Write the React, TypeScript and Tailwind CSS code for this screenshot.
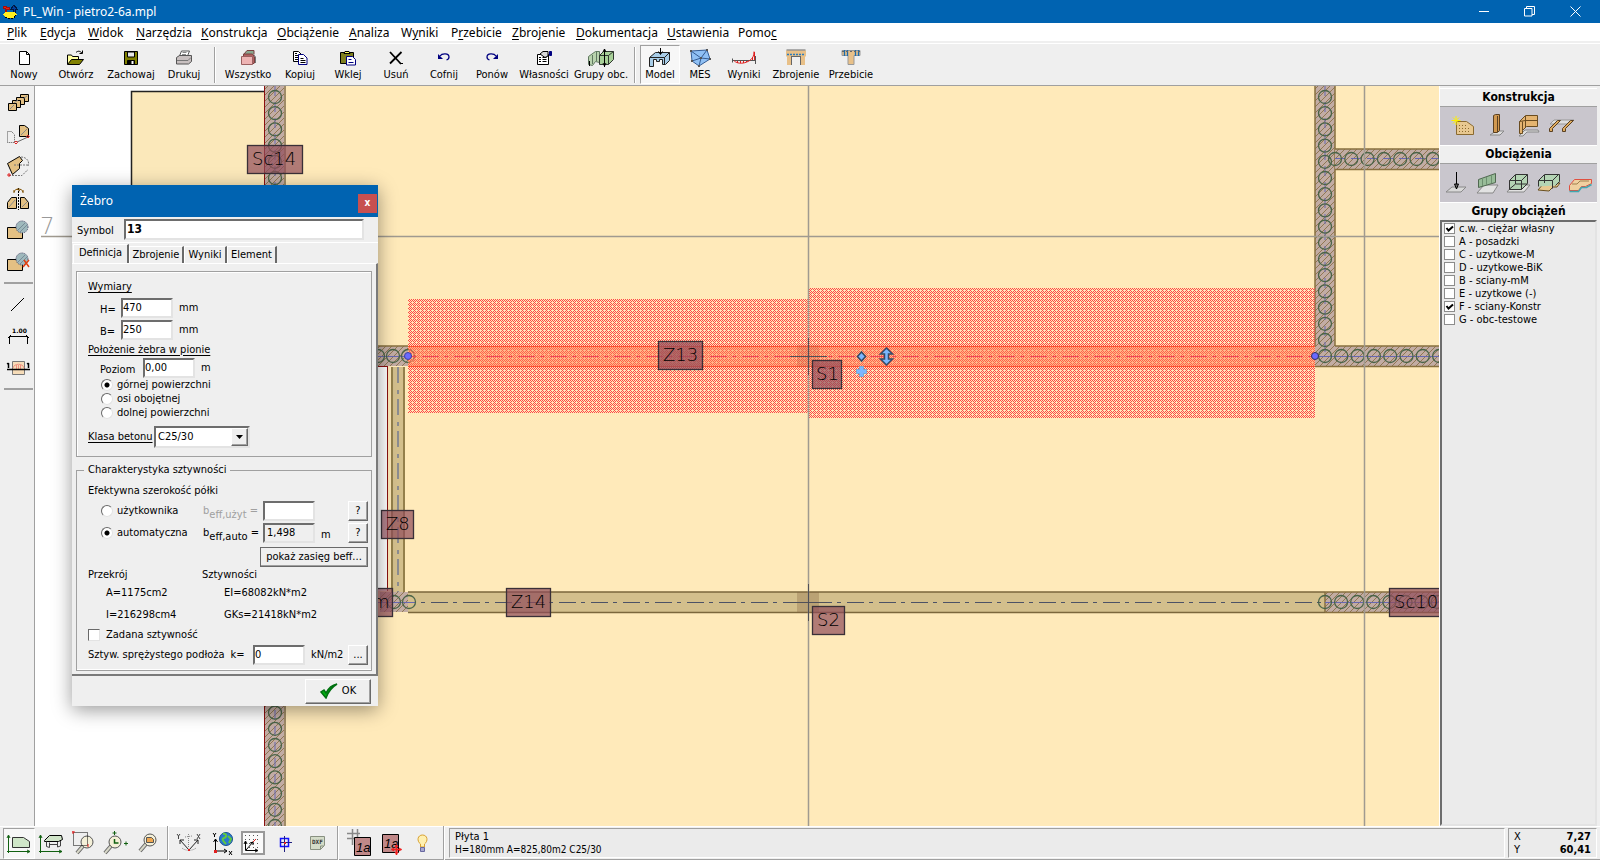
import React, { useState } from "react";

const UI_FONT = "font-['DejaVu_Sans_Condensed','DejaVu_Sans',sans-serif]";
const SEGOE = "font-['Noto_Sans','Open_Sans',sans-serif]";
const SUNKEN =
  "border-2 border-t-[#6d6d6d] border-l-[#6d6d6d] border-r-[#e3e3e3] border-b-[#e3e3e3] outline-none rounded-none";
const RAISED =
  "border border-t-white border-l-white border-r-[#696969] border-b-[#696969] shadow-[inset_-1px_-1px_0_#a0a0a0] bg-[#efefef]";

interface IconProps {
  w?: number;
  h?: number;
  children: React.ReactNode;
}

const Ico: React.FC<IconProps> = ({ w = 24, h = 20, children }) => (
  <svg width={w} height={h} viewBox={`0 0 ${w} ${h}`} fill="none" stroke="#000" strokeWidth="1" className="shrink-0">
    {children}
  </svg>
);

/* ---------- top toolbar icons (24x20) ---------- */

const icons = {
  nowy: (
    <Ico>
      <path d="M7.500 3.500h7l3 3v10h-10z" fill="#fff" />
      <path d="M14.500 3.500v3h3" />
    </Ico>
  ),
  otworz: (
    <Ico>
      <path d="M3.500 16v-9h4l1 1.500h6v3" fill="#ffffa0" />
      <path d="M3.500 16.500l4-5h12l-4 5z" fill="#808000" />
      <path d="M12 4.500c2-2 4-1.500 6 .5M18.500 2.500v3h-3" />
    </Ico>
  ),
  zachowaj: (
    <Ico>
      <path d="M5.500 3.500h13v13h-13z" fill="#808000" />
      <path d="M8.500 4h7v5h-7z" fill="#e8e8e8" />
      <path d="M8.500 12.500h7v4h-7z" fill="#000" />
      <path d="M13.500 13v3" stroke="#fff" strokeWidth="2" />
    </Ico>
  ),
  drukuj: (
    <Ico>
      <path d="M7.500 8l2-5h8l-2 5z" fill="#fff" stroke="#555" />
      <path d="M4.500 9.500l3-2h12v6l-3 2.500h-12z" fill="#c8c0c0" stroke="#555" />
      <path d="M5 12.500h11l3-3" stroke="#777" />
      <path d="M10.500 4.500h4M10 6.500h4" stroke="#888" />
    </Ico>
  ),
  wszystko: (
    <Ico>
      <path d="M8 6l3-3.500h7v4" fill="#8aa890" stroke="#7a4040" />
      <path d="M7.500 9v-3h9l2 3v6l-2 1" fill="#b06060" stroke="#7a4040" />
      <path d="M5.500 8.500h11v8h-11z" fill="#eeb4b4" stroke="#9a6060" />
      <path d="M18 7l1.500 2v6" stroke="#777" />
    </Ico>
  ),
  kopiuj: (
    <Ico>
      <path d="M5.500 3.500h5l3 3v7h-8z" fill="#fff" />
      <path d="M7 7.500h4M7 9.500h4M7 5.500h2M7 11.500h3" />
      <path d="M10.500 6.500h5l3.500 3.500v6.500h-8.500z" fill="#fff" stroke="#000080" />
      <path d="M12.500 10.500h3M12.500 12.500h5M12.500 14.500h5" />
    </Ico>
  ),
  wklej: (
    <Ico>
      <path d="M4.500 4.500h13v11h-13z" fill="#808020" />
      <path d="M8 5.500l1-2h4l1 2z" fill="#ffff60" />
      <path d="M10.500 8.500h6l3 3v5.500h-9z" fill="#fff" stroke="#000080" />
      <path d="M12.500 11.500h3M12.500 14.500h5" stroke="#000080" />
    </Ico>
  ),
  usun: (
    <Ico>
      <path d="M6 4l11 12M17.500 4L6 15.500" strokeWidth="1.800" />
      <path d="M17 15.500h2" />
    </Ico>
  ),
  cofnij: (
    <Ico>
      <path d="M8 8c2-3 9-3 9 1 0 2-1 2.500-2.500 3" stroke="#000080" strokeWidth="1.300" />
      <path d="M6 6v5h5z" fill="#000080" stroke="none" />
    </Ico>
  ),
  ponow: (
    <Ico>
      <path d="M16 8c-2-3-9-3-9 1 0 2 1 2.500 2.500 3" stroke="#000080" strokeWidth="1.300" />
      <path d="M18 6v5h-5z" fill="#000080" stroke="none" />
    </Ico>
  ),
  wlasnosci: (
    <Ico>
      <path d="M5.500 6.500h11v10h-11z" fill="#fff" />
      <path d="M7 9.500h2M10.500 9.500h4M7 11.500h2M10.500 11.500h4M7 13.500h2M10.500 13.500h4" />
      <path d="M8 6l3-2.500h5v4.500l-3 1.500z" fill="#d8d8d8" />
      <path d="M17.500 3.500h2v4h-2z" fill="#000080" stroke="#000080" />
    </Ico>
  ),
  grupy: (
    <Ico w={30} h={20}>
      <path d="M2.500 16.500v-8l7-5h4v11l-4-1-3 4z" fill="#b9d3ae" stroke="#607860" />
      <path d="M6.500 16V7M10.500 13V4" stroke="#607860" />
      <path d="M13.500 7.500l4-4h10v8l-5 5h-9z" fill="#a8d098" stroke="#303830" />
      <path d="M22.500 16.500v-9h-9M22.500 7.500l5-4" stroke="#303830" />
      <path d="M18.500 1v18M17 4l1.500-3L20 4M17 15l1.500 3 1.500-3M3.500 13v5" />
    </Ico>
  ),
  model: (
    <Ico w={26} h={20}>
      <path d="M2.500 9.500l6-5h14v8l-4 4h-3v-5h-3v2l-3 0v-2h-3v7h-4z" fill="#a8cde8" stroke="#222" />
      <path d="M3 9.500h14.500v6.500M17.500 9.500l5-5" stroke="#222" />
      <path d="M13.500 0v6M11.500 3.500l2 3 2-3" />
    </Ico>
  ),
  mes: (
    <Ico w={26} h={20}>
      <path d="M4 3l16-1 3 9-11 7-7-5z" fill="#8fc0f4" stroke="#345c94" />
      <path d="M4 3l10 7 6-8M14 10l9 1M14 10l-2 8M5 13l9-3" stroke="#345c94" />
      <path d="M3 2h2v2h-2zM19 1h2v2h-2zM22 10h2v2h-2zM11 17h2v2h-2zM4 12h2v2h-2zM13 9h2v2h-2z" fill="#555" stroke="none" />
    </Ico>
  ),
  wyniki: (
    <Ico w={28} h={20}>
      <path d="M2 12.500h24" stroke="#555" />
      <path d="M4 12.500c3 4 12 3.500 17-1 2-2 3-4 3-8" stroke="#e02020" />
      <path d="M7.500 13v2M10.500 13v2M13.500 13v2M16.500 13v1M22.500 9v3M24.500 4v8" stroke="#e02020" />
      <path d="M2.500 10.500v4M25.500 8v8" stroke="#555" />
    </Ico>
  ),
  zbrojenie: (
    <Ico>
      <path d="M2 2.500h20v6h-20z" fill="#e8c088" stroke="none" />
      <path d="M3 8h4v9h-4zM17 8h4v9h-4z" fill="#e8c088" stroke="none" />
      <path d="M7 8.500h10M2.500 2h19" stroke="#666" />
      <path d="M3 6.500h18" stroke="#2a7cc0" strokeDasharray="2 1" strokeWidth="1.500" />
      <path d="M7.500 9v8M16.500 9v8" stroke="#666" />
    </Ico>
  ),
  przebicie: (
    <Ico>
      <path d="M3 2.500h18v5h-6v9h-6v-9h-6z" fill="#e8c088" stroke="#999" />
      <path d="M5.500 2v6M8.500 2v6M16.500 2v6M19.500 2v6" stroke="#1a6cb0" strokeWidth="1.300" />
      <path d="M3 3.500h18" stroke="#666" strokeDasharray="2 2" />
    </Ico>
  ),
};

interface ToolItem {
  label: string;
  width: string;
  icon: React.ReactNode;
  active?: boolean;
}

const fileTools: ToolItem[] = [
  { label: "Nowy", width: "w-12", icon: icons.nowy },
  { label: "Otwórz", width: "w-14", icon: icons.otworz },
  { label: "Zachowaj", width: "w-[54px]", icon: icons.zachowaj },
  { label: "Drukuj", width: "w-[52px]", icon: icons.drukuj },
];

const editTools: ToolItem[] = [
  { label: "Wszystko", width: "w-14", icon: icons.wszystko },
  { label: "Kopiuj", width: "w-12", icon: icons.kopiuj },
  { label: "Wklej", width: "w-12", icon: icons.wklej },
  { label: "Usuń", width: "w-12", icon: icons.usun },
  { label: "Cofnij", width: "w-12", icon: icons.cofnij },
  { label: "Ponów", width: "w-12", icon: icons.ponow },
  { label: "Własności", width: "w-14", icon: icons.wlasnosci },
  { label: "Grupy obc.", width: "w-[58px]", icon: icons.grupy },
];

const viewTools: ToolItem[] = [
  { label: "Model", width: "w-10", icon: icons.model, active: true },
  { label: "MES", width: "w-10", icon: icons.mes },
  { label: "Wyniki", width: "w-12", icon: icons.wyniki },
  { label: "Zbrojenie", width: "w-14", icon: icons.zbrojenie },
  { label: "Przebicie", width: "w-[54px]", icon: icons.przebicie },
];

const ToolGroup: React.FC<{ items: ToolItem[] }> = ({ items }) => (
  <>
    {items.map((item) => (
      <button
        key={item.label}
        type="button"
        className={`${item.width} flex h-[39px] flex-col items-center border pt-0.5 text-[11px] leading-[14px] whitespace-nowrap ${
          item.active ? "border-t-[#a0a0a0] border-l-[#a0a0a0] border-r-white border-b-white bg-[#f7f7f7]" : "border-transparent"
        }`}
      >
        {item.icon}
        {item.label}
      </button>
    ))}
  </>
);

const VSep = () => <div className="mx-1 h-9 w-[2px] self-center border-l border-l-[#a0a0a0] bg-white" />;

/* ---------- menu ---------- */

const menu = [
  ["", "P", "lik", "w-[33px]"],
  ["", "E", "dycja", "w-12"],
  ["", "W", "idok", "w-12"],
  ["", "N", "arzędzia", "w-[65px]"],
  ["", "K", "onstrukcja", "w-[76px]"],
  ["", "O", "bciążenie", "w-[72px]"],
  ["", "A", "naliza", "w-[52px]"],
  ["W", "y", "niki", "w-[50px]"],
  ["P", "r", "zebicie", "w-[61px]"],
  ["", "Z", "brojenie", "w-16"],
  ["", "D", "okumentacja", "w-[91px]"],
  ["", "U", "stawienia", "w-[71px]"],
  ["Pomo", "c", "", "w-12"],
];

/* ---------- left toolbar icons ---------- */

const SAND = "#e3c083";

const sideTop = [
  <Ico w={24} h={22} key="array">
    {[0, 1, 2, 3].map((i) => (
      <path key={i} d={`M${14.5 - i * 4} ${3.5 + i * 3}h8v7h-8z`} fill={SAND} />
    ))}
    <path d="M4 18l4-4M8 12l4-3M17 8l4-3" stroke="#888" />
  </Ico>,
  <Ico w={24} h={22} key="move">
    <path d="M13.500 2.500h5l4 3v8h-9z" fill={SAND} />
    <path d="M15 12l6-6" stroke="#888" />
    <path d="M1.500 19.500v-11h4l3 3v8z" stroke="#555" strokeDasharray="1 1" />
    <path d="M11 19l11-5" stroke="#666" />
    <path d="M10 18l1.500 1.500L10 21l-1.500-1.500zM22 12l1.500 1.500L22 15l-1.500-1.500z" stroke="#e02020" />
  </Ico>,
  <Ico w={24} h={22} key="rotate">
    <path d="M1.500 8.500l12-7 3 4-3 3v5l-7 6z" fill={SAND} />
    <path d="M3 20.500h13l6-6M8 10h14M15 2c6 0 9 5 7 9" stroke="#777" strokeDasharray="2 1" />
    <path d="M1 20h4M3 18v4" stroke="#e02020" />
  </Ico>,
  <Ico w={24} h={24} key="mirror">
    <path d="M1.500 22.500v-6l4-5h5v11zM22.500 22.500v-6l-4-5h-4v11z" fill={SAND} />
    <path d="M3 21l6-7M16 21l5-5" stroke="#888" />
    <path d="M12.500 2v22" strokeDasharray="2 1" />
    <path d="M8 6c1-4 8-4 9 0M8 4v3M17 4v3M11 3l3 2" stroke="#805000" />
  </Ico>,
  <Ico w={24} h={22} key="cut">
    <path d="M1.500 8.500h15v11h-15z" fill={SAND} />
    <circle cx="16" cy="8" r="6" fill="#9fb9bd" stroke="#446" strokeDasharray="1 1" />
    <path d="M12 11l7-7M14 13l7-7" stroke="#788c98" />
  </Ico>,
  <Ico w={24} h={22} key="cutdel">
    <path d="M1.500 8.500h15v11h-15z" fill={SAND} />
    <circle cx="16" cy="8" r="6" fill="#9fb9bd" stroke="#446" strokeDasharray="1 1" />
    <path d="M12 11l7-7M14 13l7-7" stroke="#788c98" />
    <path d="M18 9l5 7M23 9l-6 7" stroke="#e04010" strokeWidth="1.500" />
  </Ico>,
];

const sideBottom = [
  <Ico w={24} h={22} key="line">
    <path d="M5 18L18 5" />
  </Ico>,
  <Ico w={24} h={22} key="dim">
    <text x="6" y="8" fontSize="6" fontWeight="700" fill="#000" stroke="none" fontFamily="DejaVu Sans, sans-serif">
      1.00
    </text>
    <path d="M3.500 19v-7.500h18V19M2 13l3-3M20 10l3 3" />
  </Ico>,
  <Ico w={24} h={22} key="section">
    <path d="M6.500 4.500h12v13h-12z" fill="#f6dcb8" stroke="#777" />
    <path d="M7 11c1-5 10-5 11 0M10.500 8v4M12.500 8v4M14.500 8v4" stroke="#f09080" />
    <path d="M1 12.500h23" strokeWidth="1.500" />
    <path d="M2.500 6v5M22.500 6v5M1 7l1.500-1M21 7l1.500-1" strokeWidth="1.500" />
  </Ico>,
];

/* ---------- bottom toolbar icons ---------- */

const lens = (x: number, y: number) => (
  <>
    <path d={`M${x - 4} ${y + 4}l-6 7`} stroke="#666" strokeWidth="4" />
    <path d={`M${x - 4} ${y + 4}l-6 7`} stroke="#d8d8c8" strokeWidth="2" />
    <circle cx={x} cy={y} r="6" fill="#f4f0d8" stroke="#555" />
  </>
);

const axes = <path d="M2.500 6v17M1 8l1.500-3L4 8M1 21.500h23M21 20l3 1.500-3 1.500" stroke="#106010" />;

const viewIcons = [
  <Ico w={26} h={26} key="plan">
    {axes}
    <path d="M6.500 17.500v-10h11l6 4v6z" fill="#cfe6c8" stroke="#333" />
  </Ico>,
  <Ico w={26} h={26} key="iso">
    {axes}
    <path d="M6.500 10.500l5-5h12l1 4-4 2h-14z" fill="#d0e4c8" />
    <path d="M8.500 11.500v5l3 1v-5M19.500 12v5l3-1v-5M11 14.500h8" stroke="#444" />
  </Ico>,
  <Ico w={26} h={26} key="zoomwin">
    {lens(17, 12)}
    <path d="M3.500 2.500h14v13h-14z" strokeDasharray="1 1" />
    <path d="M3 1v3M2 2h3M18 14v3" stroke="#e02020" />
  </Ico>,
  <Ico w={26} h={26} key="pan">
    {lens(13, 12)}
    <path d="M12.500 9v4h4" stroke="#106010" strokeWidth="1.500" />
    <path d="M12.500 1v4M10.500 3h4M22 13.500h4M24 11.500v4" stroke="#106010" />
  </Ico>,
  <Ico w={26} h={26} key="zoomall">
    {lens(16, 10)}
    <path d="M12.500 12.500v-5h5l2 2v3z" fill="#f0a850" stroke="#555" />
  </Ico>,
];

const axisIcons = [
  <Ico w={26} h={26} key="angle">
    <path d="M4 10l9 10 9-10M4 14v-4h4M22 14v-4h-4" stroke="#222" />
    <path d="M1 4l1.500 2L4 4M2.500 6v3M21 4l3 5M24 4l-3 5" stroke="#444" />
    <path d="M6 18c3 3 11 3 14 0M12.500 4v14M9 7l7-1" stroke="#888" strokeDasharray="1 1" />
    <path d="M12 19h2v2h-2z" fill="#e02020" stroke="none" />
  </Ico>,
  <Ico w={26} h={26} key="globe">
    <circle cx="18" cy="9" r="6.500" fill="#2878d0" stroke="#185090" />
    <path d="M15 4c4-1 4 3 1 4s0 4 2 6M20 6l3 3-2 4" stroke="#60c840" strokeWidth="2" />
    <path d="M7.500 9v12h11M5.500 12l2-3 2 3M16 19l3 2-3 2M5 3l1.500 2L8 3M6.500 5v2M21 21l3 4M24 21l-3 4" />
    <path d="M6 20h3v3h-3z" fill="#e02020" stroke="none" />
  </Ico>,
  <Ico w={26} h={26} key="grid">
    <path d="M2 2h22v22h-22z" stroke="#999" strokeWidth="2" fill="#fafafa" />
    <path d="M5 5.500h16M5 9.500h16M5 13.500h16M5 17.500h16" strokeDasharray="1 3" stroke="#555" />
    <path d="M5.500 12v8.500H17M6 20l7-8M13 12l-3 1M13 12v3M4 14l1.500-3L7 14M15 19l3 1.500-3 1.500" />
    <path d="M13 12l3-3" stroke="#e02020" />
  </Ico>,
  <Ico w={26} h={26} key="node">
    <path d="M8.500 8.500h8v8h-8z" stroke="#1010ff" strokeWidth="1.500" />
    <path d="M12.500 6v16M8 12.500h12" stroke="#202080" />
    <path d="M12 12h2v2h-2z" fill="#e02020" stroke="none" />
  </Ico>,
  <Ico w={26} h={26} key="dxf">
    <path d="M6.500 6.500h14v9l-4 4h-10z" fill="#d4dcc8" stroke="#889080" />
    <path d="M20 16h-3.500v3.500" stroke="#889080" />
    <text x="8" y="14" fontSize="6" fontWeight="700" fill="#333" stroke="none" fontFamily="DejaVu Sans Mono, monospace">
      DXF
    </text>
  </Ico>,
];

const labelIcons = [
  <Ico w={26} h={30} key="grid1a">
    <path d="M6.500 1v16M11.500 1v10M1 5.500h13M1 10.500h9" stroke="#888" strokeWidth="1.500" />
    <path d="M8.500 9.500h16v18h-16z" fill="#c08888" />
    <text x="10" y="24" fontSize="13" fontStyle="italic" fill="#000" stroke="none" fontFamily="Liberation Sans, sans-serif">
      1a
    </text>
  </Ico>,
  <Ico w={26} h={30} key="move1a">
    <path d="M4.500 6.500h16v18h-16z" fill="#c08888" />
    <text x="6" y="20" fontSize="13" fontStyle="italic" fill="#000" stroke="none" fontFamily="Liberation Sans, sans-serif">
      1a
    </text>
    <path d="M18.500 17v10M13.500 21.500h10" stroke="#f02020" strokeWidth="1.500" />
    <path d="M16.500 19l2-3 2 3zM16.500 24l2 3 2-3zM16 19.500l-3 2 3 2zM21 19.500l3 2-3 2z" fill="#f02020" stroke="none" />
  </Ico>,
  <Ico w={26} h={26} key="bulb">
    <path d="M10.500 17v-3c-4-3-3-9 2-9s6 6 2 9v3z" fill="#fff0b0" stroke="#d8a030" />
    <path d="M10.500 17.500h4v4h-4z" fill="#a8a8d0" stroke="#6868a0" />
  </Ico>,
];

/* ---------- right panel icons ---------- */

const constructionIcons = [
  <Ico w={26} h={26} key="plate">
    <path d="M5.500 21.500v-13h10l7 5v8z" fill="#e8c890" stroke="#8a6a30" />
    <path d="M8 12.500h8M8 15.500h12M8 18.500h12" stroke="#8a6a30" strokeDasharray="1 2" />
    <path d="M5 3v9M.5 7.500h9M2 4.500l6 6M8 4.500l-6 6" stroke="#fff000" />
  </Ico>,
  <Ico w={26} h={26} key="column">
    <path d="M7 22l6-4h8l-4 4z" fill="#ddd" stroke="#888" />
    <path d="M10.500 19.500v-17l2-1h4v16l-2 2z" fill="#d09850" stroke="#5a4020" />
    <path d="M14.500 3v16" stroke="#5a4020" />
  </Ico>,
  <Ico w={26} h={26} key="wall">
    <path d="M4 23l6-6h13l1 2h-12l-4 4z" fill="#ddd" stroke="#888" />
    <path d="M4.500 20.500v-12l6-6h12v11h-11l-4 4v3z" fill="#e4b470" stroke="#6a4c20" />
    <path d="M10.500 14v-11M4.500 8.500l6-1h12M7.500 17.500v-9" stroke="#6a4c20" />
  </Ico>,
  <Ico w={28} h={26} key="rib">
    <path d="M3 11l4-4h20l-4 4z" fill="#ddd" stroke="#999" />
    <path d="M2.500 18.500v-3l8-8h3l-8 8v3zM15.500 18.500v-3l8-8h3l-8 8v3z" fill="#e0ac60" stroke="#5a4020" />
  </Ico>,
];

const loadIcons = [
  <Ico w={26} h={26} key="point">
    <path d="M3 22l6-5h14l-5 5z" fill="#d8d8d8" stroke="#888" />
    <path d="M13.500 2v17" />
    <path d="M11.500 14l2 5 2-5z" fill="#666" />
  </Ico>,
  <Ico w={26} h={26} key="linear">
    <path d="M3 23l7-8h14l-5 8z" fill="#e2e2e2" stroke="#888" />
    <path d="M4.500 17.500v-8l17-6v9z" fill="#98bc98" stroke="#506850" />
    <path d="M8.500 8v8M12.500 7v8M17.500 5v8" stroke="#6e9070" />
  </Ico>,
  <Ico w={26} h={26} key="area">
    <path d="M2 22l6-7h17l-6 7z" fill="#e2e2e2" stroke="#888" />
    <path d="M4.500 19.500v-9l6-6h12v9l-6 6z" fill="#b4d4b4" stroke="#333" />
    <path d="M4.500 10.500h12v9M16.500 10.500l6-6M10.500 5v9h12M10.500 14l-6 5" stroke="#333" />
  </Ico>,
  <Ico w={26} h={26} key="area-shape">
    <path d="M2 20l6-7h16l-3 4h-4l-4 4z" fill="#e8c890" stroke="#6a5020" />
    <path d="M2.500 16.500v-6l6-6h15v7l-4 4" fill="#b4d4b4" stroke="#333" />
    <path d="M2.500 10.500h14l6-6M16.500 10.500v8M8.500 5v8" stroke="#333" />
  </Ico>,
  <Ico w={26} h={26} key="temp">
    <path d="M2.500 15.500l5-6h17v4l-6 3h-4l-3 4h-9z" fill="#f0d0a0" stroke="#e05040" />
    <path d="M2.500 21.500h9l3-4h5l5-3" stroke="#40a8b0" strokeWidth="1.500" />
    <path d="M5 14h5l3-3h9" stroke="#a08050" />
  </Ico>,
];

/* ---------- plan drawing ---------- */

const range = (from: number, to: number, step: number) => {
  const out: number[] = [];
  for (let v = from; v < to; v += step) out.push(v);
  return out;
};

const Piles: React.FC<{ xs?: number[]; ys?: number[]; x?: number; y?: number }> = ({ xs, ys, x = 0, y = 0 }) => (
  <g stroke="#4a6448" strokeWidth="1.300" fill="none">
    {xs?.map((cx) => <circle key={cx} cx={cx} cy={y} r="6.500" />)}
    {ys?.map((cy) => <circle key={cy} cx={x} cy={cy} r="6.500" />)}
  </g>
);

interface TagProps {
  x: number;
  y: number;
  w: number;
  h?: number;
  text: string;
  tx?: number;
}

const Tag: React.FC<TagProps> = ({ x, y, w, h = 28, text, tx = 5 }) => (
  <g>
    <rect x={x + 0.5} y={y + 0.5} width={w} height={h} fill="#904c5a" fillOpacity="0.7" stroke="#3a3038" strokeWidth="1.300" />
    <text x={x + tx} y={y + 20} fontSize="18" fontWeight="200" fill="#000" fontFamily="DejaVu Sans, sans-serif">
      {text}
    </text>
  </g>
);

const Plan = () => (
  <svg className="absolute inset-0 h-full w-full" aria-label="Rzut płyty">
    <defs>
      <pattern id="wall" width="6" height="6" patternUnits="userSpaceOnUse">
        <rect width="6" height="6" fill="#c2aca4" />
        <path d="M-1 7L7 -1M-1 1L1 -1M5 7L7 5" stroke="#8a7048" strokeWidth="0.900" />
      </pattern>
      <pattern id="range" width="4" height="4" patternUnits="userSpaceOnUse">
        <path
          d="M0 0h1v1h-1zM1 1h1v1h-1zM2 2h1v1h-1zM3 3h1v1h-1zM3 1h1v1h-1zM1 3h1v1h-1zM2 0h1v1h-1z"
          fill="#ff4848"
          shapeRendering="crispEdges"
        />
      </pattern>
    </defs>
    <g transform="translate(-35 -86)">
      {/* slabs */}
      <rect x="131" y="91" width="134" height="300" fill="#fbe8ba" />
      <path d="M131.500 391V91.500H265" stroke="#222" fill="none" strokeWidth="1.500" />
      <rect x="265" y="86" width="2400" height="2000" fill="#ffeaba" />
      <rect x="300" y="367" width="87" height="224" fill="#fff" />
      <path d="M387.500 367v224M360 366.500h28" stroke="#8b1010" />

      {/* vertical wall, left */}
      <rect x="265" y="86" width="20" height="2000" fill="url(#wall)" />
      <path d="M285 86v2000" stroke="#a08c68" strokeWidth="2" />
      <path d="M264.500 86v2000" stroke="#8b1010" />
      <path d="M275 86v2000" stroke="#6868b0" strokeDasharray="10 6" />
      <Piles x={275} ys={range(97, 2000, 16.2)} />

      {/* ribs */}
      <rect x="391" y="367" width="14" height="225" fill="#d3bf8c" />
      <path d="M392 367v225M404 367v225" stroke="#94804c" strokeWidth="2" />
      <path d="M398 367v225" stroke="#8c8c90" strokeWidth="2" strokeDasharray="16 7 4 5" />
      <rect x="408" y="592" width="917" height="20" fill="#d3bf8c" />
      <path d="M408 592h917M408 612.500h917" stroke="#7b673c" strokeWidth="1.500" />
      <path d="M421 602.500h904" stroke="#4c5266" strokeDasharray="4 6 17 5" />
      <rect x="380" y="592" width="28" height="20" fill="url(#wall)" />
      <path d="M376 602.500h40" stroke="#6868b0" />
      <Piles y={602} xs={[394, 409]} />

      {/* walls, right */}
      <rect x="1315" y="86" width="20" height="281" fill="url(#wall)" />
      <path d="M1315 86v260M1335 86v260" stroke="#88703f" strokeWidth="1.500" />
      <path d="M1325 86v270" stroke="#6868b0" strokeDasharray="10 6" />
      <rect x="1335" y="149" width="1200" height="20" fill="url(#wall)" />
      <path d="M1335 149h1200M1335 169.500h1200" stroke="#88703f" strokeWidth="1.500" />
      <path d="M1335 158.500h1200" stroke="#6868b0" strokeDasharray="10 6" />
      <rect x="1335" y="346" width="1200" height="20" fill="url(#wall)" />
      <path d="M1335 346h1200M1315 366.500h1200" stroke="#88703f" strokeWidth="1.500" />
      <path d="M1315 356.500h1200" stroke="#6868b0" />
      <rect x="1325" y="592" width="1200" height="20" fill="url(#wall)" />
      <path d="M1325 592h1200M1325 612.500h1200M1325 592v20" stroke="#88703f" strokeWidth="1.500" />
      <path d="M1325 602.500h1200" stroke="#6868b0" />
      <Piles x={1325} ys={range(97, 350, 16.2)} />
      <Piles y={159} xs={range(1335, 2400, 16.3)} />
      <Piles y={356} xs={range(1325, 2400, 16.3)} />
      <Piles y={602} xs={range(1325, 2400, 16.1)} />

      {/* wall left of the selected rib */}
      <rect x="360" y="346" width="48" height="20" fill="url(#wall)" />
      <path d="M360 346h48" stroke="#88703f" strokeWidth="1.500" />
      <path d="M360 356.500h48" stroke="#6868b0" />
      <Piles y={356} xs={[378, 393, 408]} />

      {/* effective width range */}
      <rect x="408" y="299" width="400" height="114" fill="url(#range)" />
      <rect x="808" y="288" width="507" height="130" fill="url(#range)" />
      <rect x="408" y="346" width="907" height="20" fill="#ff8050" fillOpacity="0.45" />
      <path d="M408 346.500h907M408 366.500h907" stroke="#ff5030" />
      <path d="M412 356.500h903" stroke="#f04858" strokeDasharray="4 6 17 5" />

      {/* axes */}
      <path d="M41 236.500h2400M808.500 86v2000M1364.500 86v2000" stroke="#a09a90" strokeWidth="1.500" />
      <text x="40" y="234" fontSize="23" fontWeight="200" fill="#999" fontFamily="DejaVu Sans, sans-serif">
        7
      </text>

      {/* slab markers */}
      <rect x="797" y="345" width="22" height="22" fill="#b05030" fillOpacity="0.2" />
      <path d="M790 356.500h37M808.500 338v37" stroke="#505058" />
      <rect x="797" y="592" width="22" height="21" fill="#806040" fillOpacity="0.3" />
      <path d="M790 602.500h37M808.500 584v37" stroke="#505058" />

      <Tag x={247} y={145} w={55} text="Sc14" />
      <Tag x={658} y={341} w={44} text="Z13" />
      <Tag x={381} y={510} w={32} text="Z8" />
      <Tag x={506} y={588} w={44} text="Z14" />
      <Tag x={812} y={360} w={29} text="S1" tx={4} />
      <Tag x={812} y={606} w={32} text="S2" />
      <Tag x={1389} y={588} w={56} text="Sc10" />
      <Tag x={300} y={588} w={92} text="m" tx={72} />

      {/* handles */}
      <circle cx="408" cy="356" r="3.500" fill="#6a6aff" stroke="#4040a0" />
      <circle cx="1315" cy="356" r="3.500" fill="#6a6aff" stroke="#303060" />
      <path d="M861.500 352l4 4.500-4 4.500-4-4.500z" fill="#7cb8ff" stroke="#344a66" strokeWidth="1.500" />
      <path d="M859.500 366.500h4v3h3v4h-3v3h-4v-3h-3v-4h3z" fill="#7cb8ff" stroke="#7aa8d0" />
      <path d="M886.500 348l6 6h-4v5h4l-6 6-6-6h4v-5h-4z" fill="#7cb8ff" stroke="#344a66" strokeWidth="1.500" />
    </g>
  </svg>
);

/* ---------- dialog ---------- */

const RadioRow: React.FC<{ name: string; label: string; checked?: boolean; className?: string }> = ({
  name,
  label,
  checked,
  className = "",
}) => (
  <label className={`ml-[13px] flex items-center gap-1 ${className}`}>
    <input
      type="radio"
      name={name}
      defaultChecked={checked}
      className="size-3 appearance-none rounded-full border border-t-[#696969] border-l-[#696969] border-r-[#e3e3e3] border-b-[#e3e3e3] bg-white checked:bg-[radial-gradient(circle,#000_2px,#fff_3px)]"
    />
    {label}
  </label>
);

const Check: React.FC<{ label: string; checked?: boolean; flat?: boolean }> = ({ label, checked, flat }) => (
  <label className={`relative flex items-center ${flat ? "gap-1" : "gap-1.5"}`}>
    <input
      type="checkbox"
      defaultChecked={checked}
      className={`peer shrink-0 appearance-none border bg-white ${
        flat ? "size-[11px] border-[#8c8c8c]" : "size-3 border-t-[#696969] border-l-[#696969] border-r-[#e3e3e3] border-b-[#e3e3e3]"
      }`}
    />
    <svg width="11" height="11" className="pointer-events-none absolute left-0 hidden peer-checked:block">
      <path d="M2.500 5l2 2.500L9 3.500" fill="none" stroke="#000" strokeWidth="2" />
    </svg>
    {label}
  </label>
);

const Field: React.FC<{ id: string; value?: string; disabled?: boolean }> = ({ id, value = "", disabled }) => (
  <input
    id={id}
    defaultValue={value}
    readOnly={disabled}
    className={`h-5 w-[52px] shrink-0 pb-px text-[11px] ${SUNKEN} ${disabled ? "bg-[#efefef] pl-0.5" : "bg-white"}`}
  />
);

const tabs = [
  { label: "Definicja", width: "w-14" },
  { label: "Zbrojenie", width: "w-[55px]" },
  { label: "Wyniki", width: "w-[43px]" },
  { label: "Element", width: "w-[50px]" },
];

const RibDialog = () => {
  const [tab, setTab] = useState("Definicja");

  return (
    <section
      className={`absolute top-[99px] left-[37px] w-[306px] bg-[#efefef] text-[11px] shadow-[0_4px_18px_rgba(0,0,0,0.4)] ${UI_FONT}`}
      aria-label="Żebro"
    >
      <header className="flex h-8 items-center justify-between bg-[#0063b1] pr-px pl-2">
        <h2 className={`text-xs text-white ${SEGOE}`}>Żebro</h2>
        <button type="button" className="mt-1 h-[19px] w-[19px] bg-[#c75050] text-[10px] leading-4 font-bold text-white">
          x
        </button>
      </header>

      <div className="flex h-[26px] items-center border-b border-b-white pr-[14px] pl-[5px]">
        <label htmlFor="symbol" className="w-[47px] pt-1">
          Symbol
        </label>
        <input id="symbol" defaultValue="13" className={`h-[21px] min-w-0 flex-1 bg-white pb-0.5 pl-px text-xs font-bold ${SUNKEN}`} />
      </div>

      <div className="flex h-5 items-end pl-px" role="tablist">
        {tabs.map((t) => (
          <button
            key={t.label}
            type="button"
            role="tab"
            aria-selected={tab === t.label}
            onClick={() => setTab(t.label)}
            className={`${t.width} border-t border-l border-r-2 border-t-white border-l-white border-r-[#696969] text-center leading-[15px] whitespace-nowrap ${
              tab === t.label ? "h-[19px] pb-1" : "h-[17px] pb-px"
            }`}
          >
            {t.label}
          </button>
        ))}
      </div>

      <div className="border-t border-r-2 border-b-2 border-t-white border-r-[#7a7a7a] border-b-[#7a7a7a] px-1 pt-[7px] pb-[3px]">
        <fieldset className="border border-[#a0a0a0] pt-1 pr-1 pb-2 pl-[11px] shadow-[inset_1px_1px_0_#fff]">
          <p className="flex h-[22px] items-center pt-px underline underline-offset-2">Wymiary</p>
          <div className="flex h-[22px] items-start pl-3">
            <label htmlFor="dim-h" className="w-[21px] pt-1">
              H=
            </label>
            <Field id="dim-h" value="470" />
            <span className="pt-0.5 pl-[6px]">mm</span>
          </div>
          <div className="flex h-[22px] items-start pl-3">
            <label htmlFor="dim-b" className="w-[21px] pt-1">
              B=
            </label>
            <Field id="dim-b" value="250" />
            <span className="pt-0.5 pl-[6px]">mm</span>
          </div>
          <p className="flex h-4 items-center underline underline-offset-2">Położenie żebra w pionie</p>
          <div className="flex h-5 items-start pl-3">
            <label htmlFor="level" className="w-[43px] pt-1">
              Poziom
            </label>
            <Field id="level" value="0,00" />
            <span className="pt-0.5 pl-[6px]">m</span>
          </div>
          <RadioRow name="pos" label="górnej powierzchni" checked className="h-[14px]" />
          <RadioRow name="pos" label="osi obojętnej" className="h-[14px]" />
          <RadioRow name="pos" label="dolnej powierzchni" className="h-[14px]" />
          <div className="mt-1.5 flex h-[22px] items-center">
            <label htmlFor="concrete" className="w-[66px] underline underline-offset-2">
              Klasa betonu
            </label>
            <div className="relative">
              <select id="concrete" className={`block h-[22px] w-24 appearance-none bg-white pl-0.5 text-[11px] ${SUNKEN}`}>
                <option>C25/30</option>
                <option>C30/37</option>
              </select>
              <span className={`pointer-events-none absolute top-0.5 right-0.5 flex h-[18px] w-[17px] items-center justify-center ${RAISED}`}>
                <svg width="7" height="4">
                  <path d="M0 0h7L3.500 4z" />
                </svg>
              </span>
            </div>
          </div>
        </fieldset>

        <fieldset className="mt-1.5 border border-[#a0a0a0] pr-[3px] pb-1 pl-[11px] [box-shadow:inset_0_-1px_0_#fff]">
          <legend className="-ml-1 px-1 leading-[14px]">Charakterystyka sztywności</legend>
          <p className="flex h-6 items-center pt-1">Efektywna szerokość półki</p>
          <div className="flex h-[22px] items-start">
            <RadioRow name="beff" label="użytkownika" checked={false} className="h-5 w-[102px]" />
            <label htmlFor="beff-user" className="flex h-5 w-[60px] items-center text-[#a0a0a0]">
              b<sub className="top-1 text-[11px]">eff,użyt</sub>&nbsp;=
            </label>
            <Field id="beff-user" />
            <button type="button" className={`ml-auto h-5 w-5 ${RAISED}`}>
              ?
            </button>
          </div>
          <div className="flex h-[22px] items-start">
            <RadioRow name="beff" label="automatyczna" checked className="h-5 w-[102px]" />
            <label htmlFor="beff-auto" className="flex h-5 w-[60px] items-center">
              b<sub className="top-1 text-[11px]">eff,auto</sub>&nbsp;=
            </label>
            <Field id="beff-auto" value="1,498" disabled />
            <span className="pt-1 pl-[6px]">m</span>
            <button type="button" className={`ml-auto h-5 w-5 ${RAISED}`}>
              ?
            </button>
          </div>
          <div className="flex h-[22px] items-end justify-end">
            <button type="button" className={`h-5 w-[108px] outline -outline-offset-1 outline-[#696969] ${RAISED}`}>
              pokaż zasięg beff...
            </button>
          </div>
          <div className="grid grid-cols-[114px_1fr] items-center">
            <p className="h-[15px]">Przekrój</p>
            <p className="h-[15px]">Sztywności</p>
            <p className="flex h-[22px] items-center pl-[18px]">A=1175cm2</p>
            <p className="flex h-[22px] items-center pl-[22px]">EI=68082kN*m2</p>
            <p className="flex h-[22px] items-center pl-[18px]">I=216298cm4</p>
            <p className="flex h-[22px] items-center pl-[22px]">GKs=21418kN*m2</p>
          </div>
          <div className="flex h-[18px] items-center">
            <Check label="Zadana sztywność" />
          </div>
          <div className="flex h-[22px] items-center">
            <label htmlFor="ground" className="flex w-[165px] gap-1.5 whitespace-nowrap">
              <span>Sztyw. sprężystego podłoża</span>
              <span>k=</span>
            </label>
            <Field id="ground" value="0" />
            <span className="pl-[6px]">kN/m2</span>
            <button type="button" className={`ml-auto h-5 w-5 ${RAISED}`}>
              ...
            </button>
          </div>
        </fieldset>
      </div>

      <footer className="flex h-[30px] items-center justify-end pr-[7px]">
        <button type="button" className={`flex h-[25px] w-[66px] items-center justify-center gap-1 ${RAISED}`}>
          <svg width="18" height="16">
            <path d="M1 9l5 6C8 9 12 4 17 1 12 2 8 6 6 10L4 7z" fill="#00b010" stroke="#007010" strokeWidth="1.500" />
          </svg>
          OK
        </button>
      </footer>
    </section>
  );
};

/* ---------- right panel ---------- */

const loadGroups = [
  { label: "c.w. - ciężar własny", on: true },
  { label: "A - posadzki", on: false },
  { label: "C - uzytkowe-M", on: false },
  { label: "D - uzytkowe-BiK", on: false },
  { label: "B - sciany-mM", on: false },
  { label: "E - uzytkowe (-)", on: false },
  { label: "F - sciany-Konstr", on: true },
  { label: "G - obc-testowe", on: false },
];

const PanelHead: React.FC<{ children: React.ReactNode }> = ({ children }) => (
  <h3 className="h-[19px] border-t border-b border-t-white border-b-[#a0a0a0] text-center text-xs leading-[17px] font-bold">
    {children}
  </h3>
);

const IconStrip: React.FC<{ items: React.ReactNode[]; start?: boolean }> = ({ items, start }) => (
  <div className={`flex h-[38px] items-center bg-[#c9c6cd] ${start ? "gap-[6px] pl-[11px]" : "gap-[5px] pl-[3px]"}`}>
    {items.map((icon, i) => (
      <button key={i} type="button">
        {icon}
      </button>
    ))}
  </div>
);

const RightPanel = () => (
  <aside className="flex w-[161px] shrink-0 flex-col border-l border-l-white bg-[#efefef] pt-0.5 pr-[3px]">
    <PanelHead>Konstrukcja</PanelHead>
    <IconStrip items={constructionIcons} start />
    <PanelHead>Obciążenia</PanelHead>
    <IconStrip items={loadIcons} />
    <PanelHead>Grupy obciążeń</PanelHead>
    <div className={`-mt-px flex-1 bg-[#ebebeb] pl-0.5 text-[11px] leading-[13px] ${SUNKEN}`}>
      {loadGroups.map((g) => (
        <Check key={g.label} label={g.label} checked={g.on} flat />
      ))}
    </div>
  </aside>
);

/* ---------- page ---------- */

const App: React.FC = () => {
  return (
    <div className={`flex h-screen min-w-[1100px] flex-col overflow-hidden bg-[#efefef] text-black ${UI_FONT}`}>
      <header className="flex h-[23px] shrink-0 items-center bg-[#0063b1] text-white">
        <svg width="17" height="16" className="ml-0.5" shapeRendering="crispEdges">
          <path d="M1 2h3v1h3v2h-3v3h-1v-4h-2z" fill="#f02010" stroke="#a01008" />
          <path d="M12 1l3 4h-2v3h-2V5h-2z" fill="#0040a0" stroke="#001840" />
          <path d="M1 10l3-2h8l3 2-4 4H4z" fill="#fff020" />
          <path d="M3 13l2 1h7l2-3" fill="none" stroke="#000" strokeDasharray="2 1" />
        </svg>
        <h1 className={`ml-1 text-xs ${SEGOE}`}>PL_Win - pietro2-6a.mpl</h1>
        <div className="ml-auto flex">
          <button type="button" aria-label="Minimalizuj" className="flex w-[45px] justify-center">
            <Ico w={11} h={11}>
              <path d="M0 5.500h10" stroke="#fff" />
            </Ico>
          </button>
          <button type="button" aria-label="Przywróć" className="flex w-[45px] justify-center">
            <Ico w={11} h={11}>
              <path d="M.5 2.500h7.500v7.500h-7.500zM2.500 2.500v-2h8v8h-2.500" stroke="#fff" />
            </Ico>
          </button>
          <button type="button" aria-label="Zamknij" className="mr-0.5 flex w-[46px] justify-center">
            <Ico w={11} h={11}>
              <path d="M.5 .5l10 10M10.500 .5l-10 10" stroke="#fff" />
            </Ico>
          </button>
        </div>
      </header>

      <nav className={`flex h-[18px] shrink-0 bg-white pl-[7px] text-xs leading-[19px] ${SEGOE}`}>
        {menu.map(([before, key, after, width]) => (
          <button key={before + key + after} type="button" className={`${width} shrink-0 text-left whitespace-nowrap`}>
            {before}
            <span className="underline underline-offset-2">{key}</span>
            {after}
          </button>
        ))}
      </nav>

      <div className="mt-[2px] flex h-[43px] shrink-0 items-center border-t border-b border-t-white border-b-[#a0a0a0]">
        <ToolGroup items={fileTools} />
        <VSep />
        <ToolGroup items={editTools} />
        <VSep />
        <ToolGroup items={viewTools} />
      </div>

      <div className="flex min-h-0 flex-1">
        <aside className="flex w-[35px] shrink-0 flex-col items-center border-r border-r-[#a0a0a0] pl-0.5">
          {sideTop.map((icon, i) => (
            <button key={i} type="button" className="flex h-8 w-8 items-center justify-center">
              {icon}
            </button>
          ))}
          <hr className="my-1 w-[29px] border-t-2 border-t-[#a0a0a0]" />
          {sideBottom.map((icon, i) => (
            <button key={i} type="button" className="flex h-8 w-8 items-center justify-center">
              {icon}
            </button>
          ))}
          <hr className="my-1 w-[29px] border-t-2 border-t-[#a0a0a0]" />
        </aside>

        <main className="relative min-w-0 flex-1 overflow-hidden bg-white">
          <Plan />
          <RibDialog />
        </main>

        <RightPanel />
      </div>

      <footer className="flex h-[34px] shrink-0 items-center border-t border-b border-t-white border-b-[#a0a0a0] pr-[3px] pl-[3px]">
        {viewIcons.map((icon, i) => (
          <button
            key={i}
            type="button"
            className={`flex h-[31px] w-8 items-center justify-center ${
              i === 0 ? "border border-t-[#a0a0a0] border-l-[#a0a0a0] border-r-white border-b-white bg-[#f7f7f7]" : ""
            }`}
          >
            {icon}
          </button>
        ))}
        <VSep />
        {axisIcons.map((icon, i) => (
          <button key={i} type="button" className="flex h-[31px] w-8 items-center justify-center">
            {icon}
          </button>
        ))}
        <VSep />
        {labelIcons.map((icon, i) => (
          <button key={i} type="button" className="flex h-[31px] w-8 items-center justify-center">
            {icon}
          </button>
        ))}
        <VSep />
        <div className="flex h-[30px] flex-1 flex-col justify-center border border-t-[#a0a0a0] border-l-[#a0a0a0] border-r-white border-b-white bg-[#ebebeb] pl-[5px]">
          <p className="text-[11px] leading-[13px]">Płyta 1</p>
          <p className="text-[10px] leading-[13px]">H=180mm A=825,80m2 C25/30</p>
        </div>
        <dl className="ml-[3px] grid h-[30px] w-[89px] grid-cols-2 content-center border border-t-[#a0a0a0] border-l-[#a0a0a0] border-r-white border-b-white bg-[#ebebeb] px-[5px] text-[11px] leading-[13px]">
          <dt>X</dt>
          <dd className="text-right font-bold">7,27</dd>
          <dt>Y</dt>
          <dd className="text-right font-bold">60,41</dd>
        </dl>
      </footer>
    </div>
  );
};

export default App;
